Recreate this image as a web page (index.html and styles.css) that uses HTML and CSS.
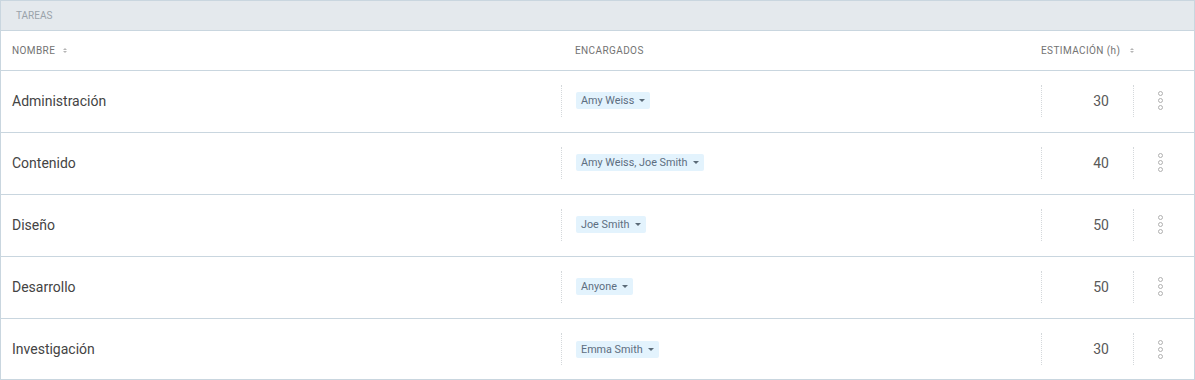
FILE: index.html
```html
<!DOCTYPE html>
<html>
<head>
    <title>Tareas</title>
    <link rel="stylesheet" href="styles.css">
</head>
<body>
    <div class="tasks">
        <div class="tasks-title">TAREAS</div>
        <div class="row head">
            <div class="cell name">NOMBRE <span class="sort"></span></div>
            <div class="cell people">ENCARGADOS</div>
            <div class="cell est">ESTIMACIÓN (h) <span class="sort"></span></div>
            <div class="cell menu"></div>
        </div>

        <div class="row">
            <div class="cell name">Administración</div>
            <div class="cell people sep"><span class="tag">Amy Weiss <i class="caret"></i></span></div>
            <div class="cell est sep">30</div>
            <div class="cell menu sep"><span class="dots"><i></i><i></i><i></i></span></div>
        </div>
        <div class="row">
            <div class="cell name">Contenido</div>
            <div class="cell people sep"><span class="tag">Amy Weiss, Joe Smith <i class="caret"></i></span></div>
            <div class="cell est sep">40</div>
            <div class="cell menu sep"><span class="dots"><i></i><i></i><i></i></span></div>
        </div>
        <div class="row">
            <div class="cell name">Diseño</div>
            <div class="cell people sep"><span class="tag">Joe Smith <i class="caret"></i></span></div>
            <div class="cell est sep">50</div>
            <div class="cell menu sep"><span class="dots"><i></i><i></i><i></i></span></div>
        </div>
        <div class="row">
            <div class="cell name">Desarrollo</div>
            <div class="cell people sep"><span class="tag">Anyone <i class="caret"></i></span></div>
            <div class="cell est sep">50</div>
            <div class="cell menu sep"><span class="dots"><i></i><i></i><i></i></span></div>
        </div>
        <div class="row">
            <div class="cell name">Investigación</div>
            <div class="cell people sep"><span class="tag">Emma Smith <i class="caret"></i></span></div>
            <div class="cell est sep">30</div>
            <div class="cell menu sep"><span class="dots"><i></i><i></i><i></i></span></div>
        </div>
    </div>
</body>
</html>
```

FILE: styles.css
```css
body {
    margin: 0;
    font-family: Roboto, "Liberation Sans", sans-serif;
    background: #fff;
}
.tasks {
    width: 1193px;
    height: 378px;
    border: 1px solid #c9d6df;
    overflow: hidden;
}
.tasks-title {
    height: 29px;
    line-height: 29px;
    padding-left: 15px;
    background: #e4e9ed;
    border-bottom: 1px solid #c9d6df;
    font-size: 10px;
    color: #9aa3aa;
}
.row {
    display: grid;
    grid-template-columns: 560px 480px 92px 61px;
    height: 61px;
    box-sizing: border-box;
    height: 62px;
    padding-bottom: 2px;
    border-bottom: 1px solid #c9d6df;
    align-items: center;
}
.row:last-child {
    border-bottom: none;
}
.row.head {
    height: 40px;
    padding-bottom: 0;
}
.cell {
    font-size: 14px;
    color: #444;
    display: flex;
    align-items: center;
    height: 32px;
}
.head .cell {
    font-size: 10px;
    color: #737373;
    letter-spacing: 0.4px;
}
.name {
    padding-left: 11px;
}
.people {
    padding-left: 14px;
}
.sep {
    border-left: 1px dotted #d4d8db;
}
.est {
    justify-content: flex-end;
    padding-right: 24px;
    color: #595959;
}
.head .est {
    justify-content: flex-start;
    padding-right: 0;
    white-space: nowrap;
}
.menu {
    justify-content: center;
}
.sort {
    display: inline-flex;
    flex-direction: column;
    gap: 1px;
    margin-left: 8px;
}
.sort::before,
.sort::after {
    content: "";
    border-left: 2px solid transparent;
    border-right: 2px solid transparent;
}
.sort::before {
    border-bottom: 2px solid #b5b5b5;
}
.sort::after {
    border-top: 2px solid #b5b5b5;
}
.head .est .sort {
    margin-left: 10px;
}
.tag {
    display: inline-flex;
    align-items: center;
    height: 17px;
    padding: 0 5px;
    background: #e3f3fd;
    border-radius: 2px;
    font-size: 10.8px;
    color: #5d6e80;
}
.caret {
    display: inline-block;
    margin-left: 5px;
    border-left: 3px solid transparent;
    border-right: 3px solid transparent;
    border-top: 3px solid #5b6b78;
}
.dots {
    display: flex;
    flex-direction: column;
    gap: 2px;
    margin-left: -7px;
}
.dots i {
    width: 3px;
    height: 3px;
    border: 1px solid #b0b0b0;
    border-radius: 50%;
}
```
